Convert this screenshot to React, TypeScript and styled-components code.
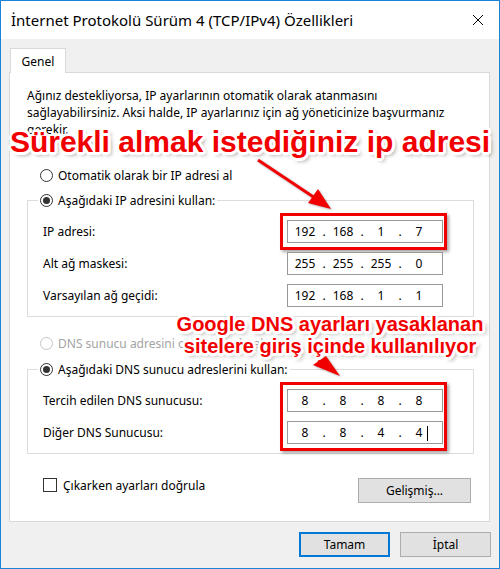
import React from "react";
import styled, { createGlobalStyle } from "styled-components";

const GlobalStyle = createGlobalStyle`
  html, body { margin: 0; padding: 0; background: #fff; }
  body {
    font-family: "Noto Sans", "Segoe UI", sans-serif;
    font-size: 12px;
    color: #000;
  }
  * { box-sizing: border-box; }
`;

const Window = styled.div`
  position: relative;
  width: 500px;
  height: 569px;
  border: 1px solid #1883d7;
  background: #f0f0f0;
  display: flex;
  flex-direction: column;
  overflow: hidden;
`;

const TitleBar = styled.div`
  height: 38px;
  background: #fff;
  display: flex;
  align-items: center;
  justify-content: space-between;
  padding: 0 16px 0 10px;
  font-size: 15px;
`;

const Body = styled.div`
  flex: 1;
  display: flex;
  flex-direction: column;
  padding: 9px 9px 0 8px;
`;

const Tab = styled.div`
  position: relative;
  z-index: 1;
  width: 56px;
  height: 25px;
  margin: 0 0 -1px 1px;
  background: #fff;
  border: 1px solid #d9d9d9;
  border-bottom: none;
  display: flex;
  align-items: center;
  justify-content: center;
`;

const Panel = styled.div`
  width: 481px;
  height: 450px;
  background: #fff;
  border: 1px solid #d9d9d9;
  padding: 14px 15px 0 17px;
  display: flex;
  flex-direction: column;
`;

const Intro = styled.p`
  margin: 0;
  line-height: 17px;
  white-space: nowrap;
`;

const RadioRow = styled.label<{ $mt: number; $disabled?: boolean }>`
  display: flex;
  align-items: center;
  height: 17px;
  margin: ${(p) => p.$mt}px 0 0 13px;
  color: ${(p) => (p.$disabled ? "#a3a3a3" : "#000")};
`;

const RadioDot = styled.span<{ $checked?: boolean; $disabled?: boolean }>`
  width: 13px;
  height: 13px;
  border-radius: 50%;
  border: 1px solid ${(p) => (p.$disabled ? "#c4c4c4" : "#333")};
  margin-right: 5px;
  display: flex;
  align-items: center;
  justify-content: center;
  flex-shrink: 0;
  &::after {
    content: "";
    display: ${(p) => (p.$checked ? "block" : "none")};
    width: 7px;
    height: 7px;
    border-radius: 50%;
    background: #333;
  }
`;

const Group = styled.fieldset<{ $mt: number }>`
  margin: ${(p) => p.$mt}px 0 0 0;
  width: 447px;
  border: 1px solid #dcdcdc;
  padding: 11px 0 9px 15px;
  min-width: 0;
`;

const Legend = styled.legend`
  margin-left: -5px;
  padding: 0 2px;
  display: flex;
  align-items: center;
  height: 17px;
`;

const Rows = styled.div`
  display: grid;
  grid-template-columns: 244px 156px;
  grid-auto-rows: 23px;
  row-gap: 9px;
  align-items: center;
`;

const Highlight = styled.div`
  position: relative;
  grid-column: 2;
  display: grid;
  grid-auto-rows: 23px;
  row-gap: 9px;
  &::after {
    content: "";
    position: absolute;
    inset: -7px -4px -7px -7px;
    border: 3px solid #f20000;
    box-shadow: 2px 2px 3px rgba(0, 0, 0, 0.35);
    pointer-events: none;
  }
`;

const IpBox = styled.div`
  position: relative;
  width: 156px;
  height: 23px;
  border: 1px solid #999;
  background: #fff;
  display: grid;
  grid-template-columns: 30px 8px 30px 8px 30px 8px 30px;
  align-items: center;
  padding-left: 2px;
  font-size: 12px;
  text-align: center;
`;

const Caret = styled.span`
  position: absolute;
  left: 139px;
  top: 4px;
  width: 1px;
  height: 15px;
  background: #000;
`;

const BottomRow = styled.div`
  display: flex;
  justify-content: space-between;
  align-items: flex-start;
  margin: 24px 3px 0 16px;
`;

const Check = styled.label`
  display: flex;
  align-items: center;
  height: 14px;
  gap: 6px;
`;

const CheckBox = styled.span`
  width: 14px;
  height: 14px;
  border: 1px solid #333;
  background: #fff;
`;

const Button = styled.button<{ $w: number; $focus?: boolean }>`
  width: ${(p) => p.$w}px;
  height: 25px;
  background: #e1e1e1;
  border: 1px solid ${(p) => (p.$focus ? "#0078d7" : "#adadad")};
  box-shadow: ${(p) => (p.$focus ? "inset 0 0 0 1px #0078d7" : "none")};
  font: inherit;
  color: #000;
  padding: 0;
`;

const DialogButtons = styled.div`
  display: flex;
  justify-content: flex-end;
  gap: 10px;
  margin: 10px -1px 0 0;
`;

const Callout = styled.div<{ $size: number; $lh: number; $top: number; $left: number; $w: number }>`
  position: absolute;
  top: ${(p) => p.$top}px;
  left: ${(p) => p.$left}px;
  width: ${(p) => p.$w}px;
  font-family: "Liberation Sans", Arial, sans-serif;
  font-weight: bold;
  font-size: ${(p) => p.$size}px;
  line-height: ${(p) => p.$lh}px;
  text-align: center;
  white-space: nowrap;
  color: #f20000;
  text-shadow: 2.5px 0 0 #fff, -2.5px 0 0 #fff, 0 2.5px 0 #fff, 0 -2.5px 0 #fff,
    2px 2px 0 #fff, -2px -2px 0 #fff, 2px -2px 0 #fff, -2px 2px 0 #fff,
    1px 3px 0 #fff, 3px 1px 0 #fff, -1px 3px 0 #fff, 1px -3px 0 #fff,
    3px 3px 4px rgba(0, 0, 0, 0.45);
  pointer-events: none;
`;

const Arrows = styled.svg`
  position: absolute;
  left: -1px;
  top: -1px;
  pointer-events: none;
  filter: drop-shadow(1px 1px 1px rgba(0, 0, 0, 0.3));
`;

function Ip({ parts, caret }: { parts: string[]; caret?: boolean }) {
  return (
    <IpBox>
      {parts.map((part, i) => (
        <React.Fragment key={i}>
          {i > 0 && <span>.</span>}
          <span>{part}</span>
        </React.Fragment>
      ))}
      {caret && <Caret />}
    </IpBox>
  );
}

export default function App() {
  return (
    <>
      <GlobalStyle />
      <Window>
        <TitleBar>
          <span>İnternet Protokolü Sürüm 4 (TCP/IPv4) Özellikleri</span>
          <svg width="10" height="10" viewBox="0 0 10 10">
            <path d="M0 0L10 10M10 0L0 10" stroke="#000" strokeWidth="1" />
          </svg>
        </TitleBar>
        <Body>
          <Tab>Genel</Tab>
          <Panel>
            <Intro>
              Ağınız destekliyorsa, IP ayarlarının otomatik olarak atanmasını
              <br />
              sağlayabilirsiniz. Aksi halde, IP ayarlarınız için ağ yöneticinize başvurmanız
              <br />
              gerekir.
            </Intro>
            <RadioRow $mt={29}>
              <RadioDot />
              Otomatik olarak bir IP adresi al
            </RadioRow>
            <Group $mt={8}>
              <Legend>
                <RadioDot $checked />
                Aşağıdaki IP adresini kullan:
              </Legend>
              <Rows>
                <span>IP adresi:</span>
                <Highlight>
                  <Ip parts={["192", "168", "1", "7"]} />
                </Highlight>
                <span>Alt ağ maskesi:</span>
                <Ip parts={["255", "255", "255", "0"]} />
                <span>Varsayılan ağ geçidi:</span>
                <Ip parts={["192", "168", "1", "1"]} />
              </Rows>
            </Group>
            <RadioRow $mt={18} $disabled>
              <RadioDot $disabled />
              DNS sunucu adresini otomatik olarak al
            </RadioRow>
            <Group $mt={9}>
              <Legend>
                <RadioDot $checked />
                Aşağıdaki DNS sunucu adreslerini kullan:
              </Legend>
              <Rows>
                <span style={{ gridRow: 1 }}>Tercih edilen DNS sunucusu:</span>
                <span style={{ gridRow: 2 }}>Diğer DNS Sunucusu:</span>
                <Highlight style={{ gridRow: "1 / span 2" }}>
                  <Ip parts={["8", "8", "8", "8"]} />
                  <Ip parts={["8", "8", "4", "4"]} caret />
                </Highlight>
              </Rows>
            </Group>
            <BottomRow>
              <Check>
                <CheckBox />
                Çıkarken ayarları doğrula
              </Check>
              <Button $w={113}>Gelişmiş...</Button>
            </BottomRow>
          </Panel>
          <DialogButtons>
            <Button $w={91} $focus>
              Tamam
            </Button>
            <Button $w={91}>İptal</Button>
          </DialogButtons>
        </Body>

        <Callout $size={30} $lh={30} $top={126} $left={6} $w={486}>
          Sürekli almak istediğiniz ip adresi
        </Callout>
        <Callout $size={20} $lh={22} $top={312} $left={174} $w={310}>
          Google DNS ayarları yasaklanan
          <br />
          sitelere giriş içinde kullanılıyor
        </Callout>
        <Arrows width="500" height="569" viewBox="0 0 500 569">
          <line x1="258" y1="160" x2="318" y2="200" stroke="#f20000" strokeWidth="3" />
          <polygon points="331,209 308,203 318,189" fill="#f20000" />
          <line x1="318" y1="361" x2="332" y2="370" stroke="#f20000" strokeWidth="3" />
          <polygon points="340,376 313,365 326,356" fill="#f20000" />
        </Arrows>
      </Window>
    </>
  );
}
